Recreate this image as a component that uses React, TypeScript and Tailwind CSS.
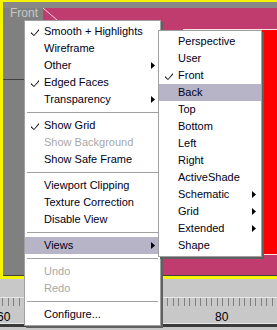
type Item = {
  label?: string;
  check?: boolean;
  arrow?: boolean;
  disabled?: boolean;
  active?: boolean;
  sep?: boolean;
};

const mainItems: Item[] = [
  { label: "Smooth + Highlights", check: true },
  { label: "Wireframe" },
  { label: "Other", arrow: true },
  { label: "Edged Faces", check: true },
  { label: "Transparency", arrow: true },
  { sep: true },
  { label: "Show Grid", check: true },
  { label: "Show Background", disabled: true },
  { label: "Show Safe Frame" },
  { sep: true },
  { label: "Viewport Clipping" },
  { label: "Texture Correction" },
  { label: "Disable View" },
  { sep: true },
  { label: "Views", arrow: true, active: true },
  { sep: true },
  { label: "Undo", disabled: true },
  { label: "Redo", disabled: true },
  { sep: true },
  { label: "Configure..." },
];

const viewItems: Item[] = [
  { label: "Perspective" },
  { label: "User" },
  { label: "Front", check: true },
  { label: "Back", active: true },
  { label: "Top" },
  { label: "Bottom" },
  { label: "Left" },
  { label: "Right" },
  { label: "ActiveShade" },
  { label: "Schematic", arrow: true },
  { label: "Grid", arrow: true },
  { label: "Extended", arrow: true },
  { label: "Shape" },
];

const Check = () => (
  <svg width="8" height="7" viewBox="0 0 8 7" className="absolute left-[6px] top-[6px]">
    <path d="M0 3 L3 6 L8 0 L8 1.5 L3 7 L0 4.5 Z" fill="#000" />
  </svg>
);

const Arrow = () => (
  <svg width="4" height="7" viewBox="0 0 4 7" className="absolute right-[5px] top-[5px]">
    <path d="M0 0 L4 3.5 L0 7 Z" fill="#000" />
  </svg>
);

const MenuList = ({ items }: { items: Item[] }) => (
  <div className="flex flex-col">
    {items.map((it, i) =>
      it.sep ? (
        <div key={i} className="h-[9px] flex items-center px-[2px]">
          <div className="h-px w-full bg-[#a0a0a0]" />
        </div>
      ) : (
        <div
          key={i}
          className={`relative h-[17px] leading-[17px] pl-[19px] pr-[20px] whitespace-nowrap ${
            it.active ? "bg-[#b8b4c8]" : ""
          } ${it.disabled ? "text-[#a8a8a8]" : "text-[#000018]"}`}
        >
          {it.check && <Check />}
          {it.label}
          {it.arrow && <Arrow />}
        </div>
      )
    )}
  </div>
);

const Ruler = () => (
  <div className="flex h-[9px] items-start">
    {Array.from({ length: 52 }).map((_, i) => (
      <div key={i} className="w-[5.5px] shrink-0 h-full flex justify-start">
        <div className="w-px h-[8px] bg-[#808080]" />
      </div>
    ))}
  </div>
);

export default function App() {
  return (
    <div
      className="relative w-[277px] h-[330px] overflow-hidden bg-[#c8c8c8] text-[11px]"
      style={{ fontFamily: '"Liberation Sans", Arial, sans-serif' }}
    >
      {/* viewport */}
      <div className="h-[279px] border-l-[3px] border-t-[2px] border-b-[3px] border-[#f4f400] bg-[#808080] flex flex-col">
        <div className="flex-1 flex flex-col border-b border-[#404040]">
          <div className="flex h-[6px] bg-[#888888]" />
          <div className="flex flex-1">
            <div className="w-[40px] relative">
              <span className="absolute left-[7px] top-[-4px] text-[#c8c8c8] text-[12px]">Front</span>
              <div className="absolute left-0 right-0 top-[71px] h-px bg-[#404040]" />
            </div>
            <div className="flex-1 bg-[#c03c6e] relative flex flex-col pt-[21px] pb-[20px] pl-[140px]">
              <svg width="14" height="12" className="absolute left-0 top-0">
                <path d="M0 0 L14 12" stroke="#f0d0e0" strokeWidth="1" />
              </svg>
              <div className="flex-1 bg-[#ff0000] border-y border-[#ffe0e0]" />
            </div>
          </div>
        </div>
      </div>

      {/* timeline */}
      <div className="relative h-[48px] pt-[18px]">
        <div className="h-px bg-[#e8e8e8]" />
        <div className="pl-[2px]">
          <Ruler />
        </div>
        <span className="absolute left-[-3px] top-[29px] text-[12px] text-black">60</span>
        <span className="absolute left-[215px] top-[29px] text-[12px] text-black">80</span>
        <div className="absolute left-0 right-0 bottom-0 h-[3px] bg-[#3a3a3a]" />
        <div className="absolute left-0 right-0 bottom-[3px] h-px bg-[#e8e8e8]" />
      </div>

      {/* main context menu */}
      <div className="absolute left-[24px] top-[20px] w-[137px] bg-white border border-[#a0a0a0] shadow-[2px_2px_0_#606060] pt-[2px] pb-[2px]">
        <MenuList items={mainItems} />
      </div>

      {/* views submenu */}
      <div className="absolute left-[158px] top-[30px] w-[104px] bg-white border border-[#a0a0a0] shadow-[2px_2px_0_#606060] pt-[2px] pb-[2px]">
        <MenuList items={viewItems} />
      </div>
    </div>
  );
}
